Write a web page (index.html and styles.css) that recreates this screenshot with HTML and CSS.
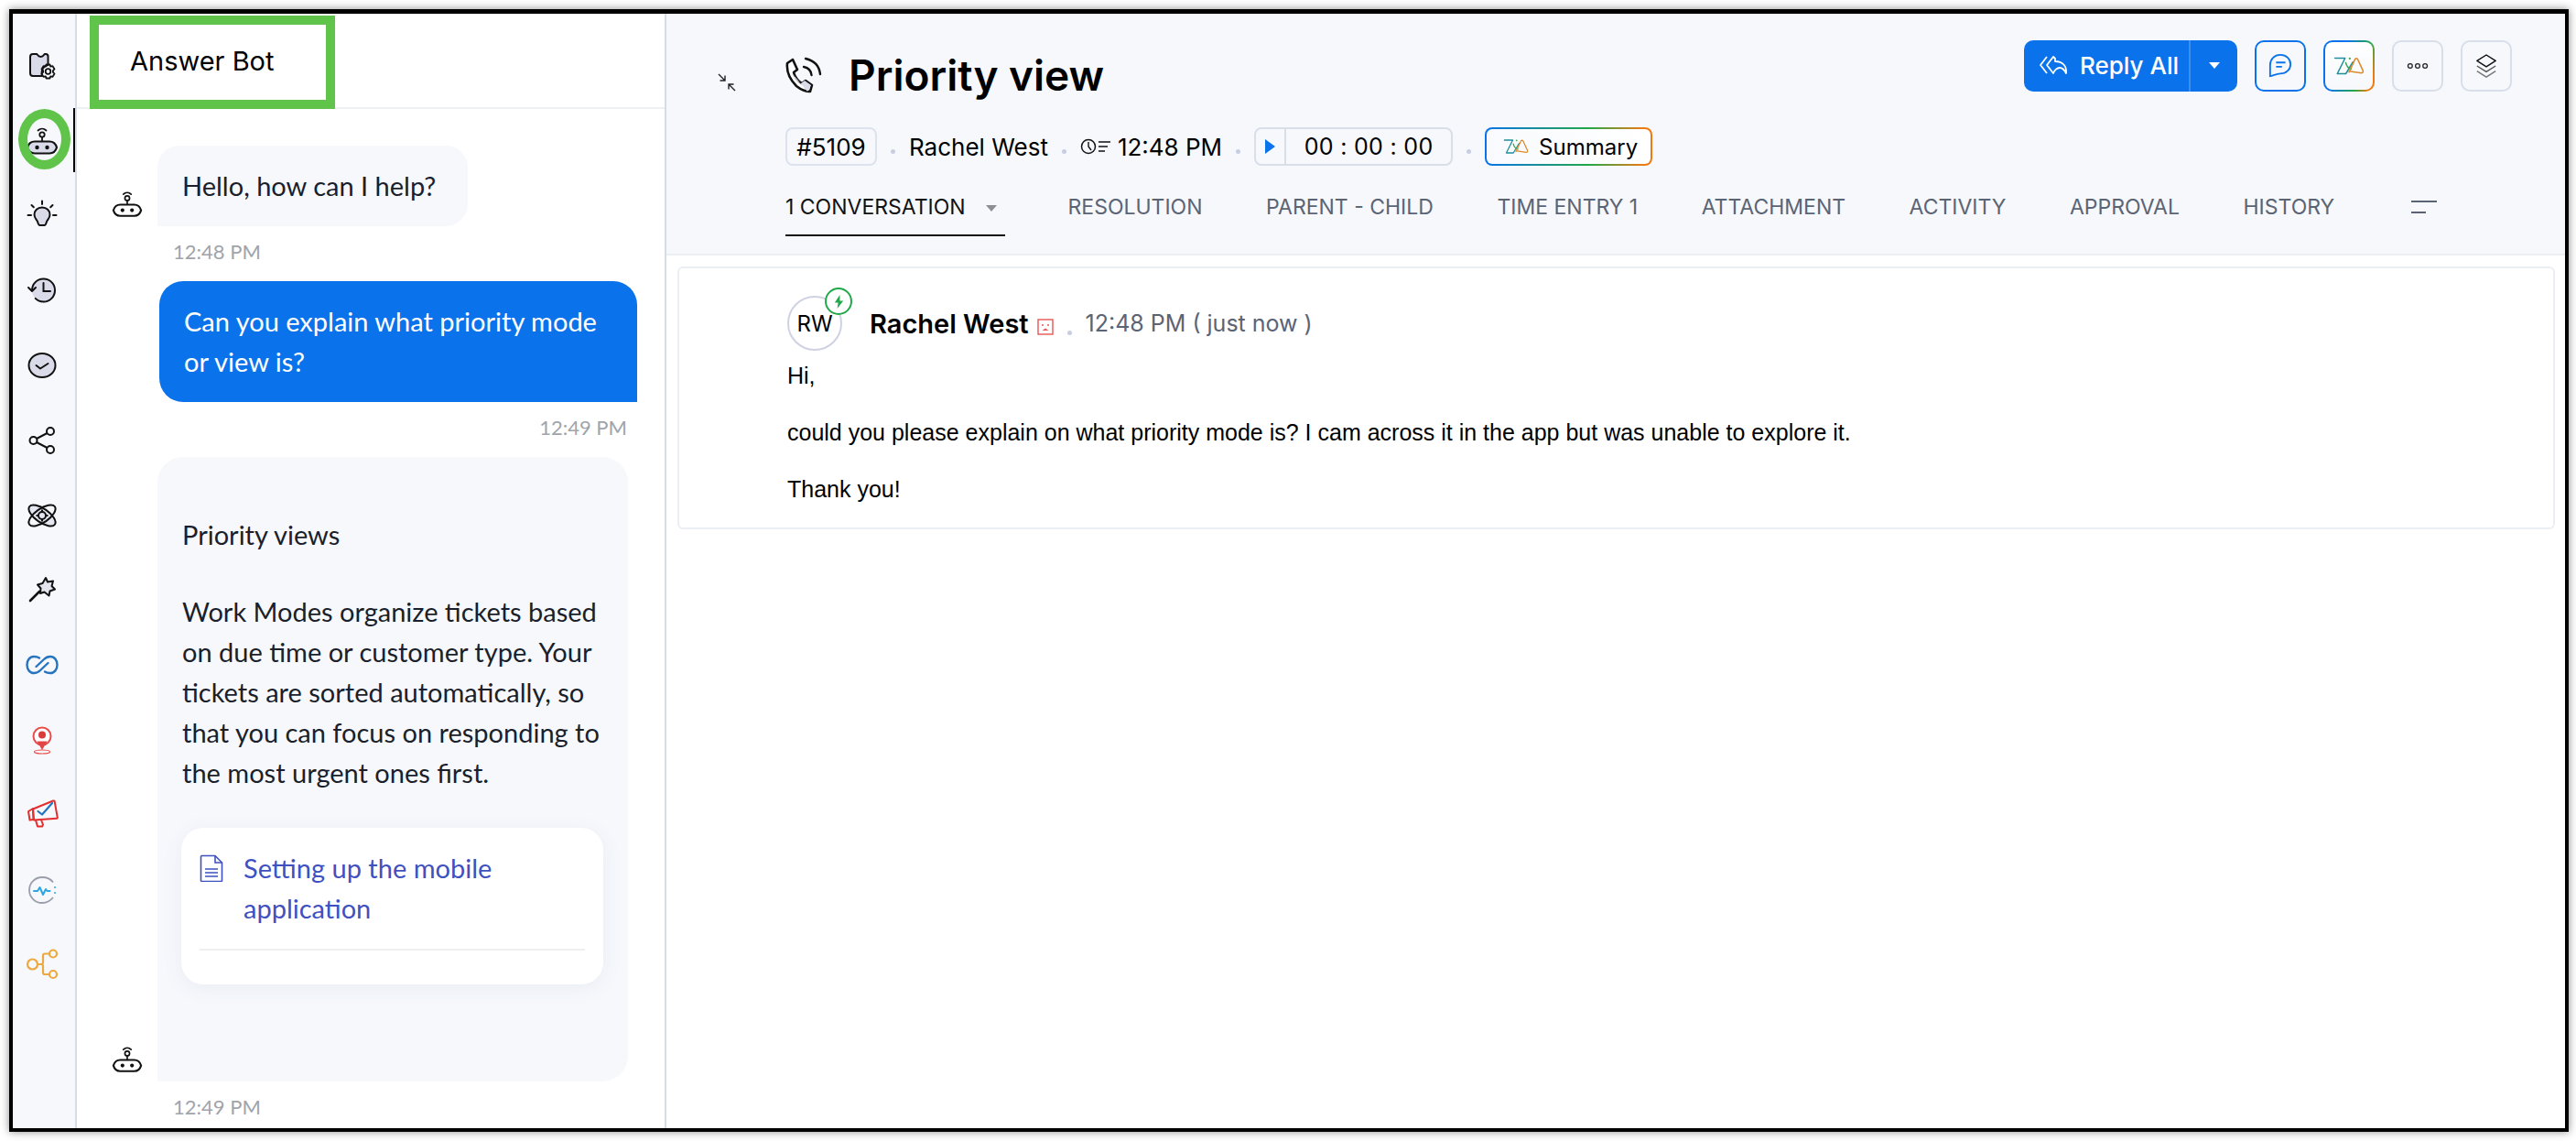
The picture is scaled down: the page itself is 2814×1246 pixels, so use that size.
FILE: index.html
```html
<!DOCTYPE html>
<html lang="en">

<head>
    <meta charset="utf-8">
    <meta name="viewport" content="width=device-width, initial-scale=1.0">
    <title>Priority view</title>
    <link rel="stylesheet" href="styles.css">
</head>

<body>

    <svg class="defs" width="0" height="0" aria-hidden="true">
        <defs>
            <symbol id="bot" viewBox="0 0 36 36">
                <path d="M13.5 6.5c2.6-2.4 6.4-2.4 9 0" fill="none" stroke="currentColor" stroke-width="1.8" stroke-linecap="round"/>
                <circle cx="18" cy="11" r="2.7" fill="none" stroke="currentColor" stroke-width="1.8"/>
                <path d="M18 13.7v4.8" stroke="currentColor" stroke-width="1.8"/>
                <path d="M10 18.5h16c4 0 7 3 8 6.5-1 3.500-4 6.500-8 6.500H10c-4 0-7-3-8-6.500 1-3.500 4-6.500 8-6.500z" fill="var(--bot-fill, none)" stroke="currentColor" stroke-width="2.200"/>
                <circle cx="12.500" cy="25" r="2.200" fill="currentColor"/>
                <circle cx="23.500" cy="25" r="2.200" fill="currentColor"/>
            </symbol>
            <symbol id="zia" viewBox="0 0 40 26">
                <path d="M2 3h13L5 23h11l9-15" fill="none" stroke="#1f8f9c" stroke-width="1.800" stroke-linejoin="round" stroke-linecap="round"/>
                <path d="M16 9c1 5 3 7 7 8" fill="none" stroke="#3aa655" stroke-width="1.800" stroke-linecap="round"/>
                <path d="M20 21l8-17c1-1 2-1 3 0l7 15c.5 2-.5 3-2 3l-14-2" fill="none" stroke="#dd8a2c" stroke-width="1.800" stroke-linejoin="round" stroke-linecap="round"/>
                <circle cx="21" cy="3.500" r="1.300" fill="#3aa655"/>
            </symbol>
        </defs>
    </svg>

    <div class="frame">

        <nav class="rail">
            <a class="rail_item">
                <svg viewBox="0 0 36 36"><path d="M8 5h4c1 0 1 3 4.500 3S20 5 21 5h1c1.500 0 2.500 1 2.500 2.500V17c-5 1-8 5-6.500 12H8c-1.700 0-3-1.300-3-3V8c0-1.700 1.300-3 3-3z" fill="#d9dbe9" stroke="#111" stroke-width="2" stroke-linejoin="round"/><circle cx="24.500" cy="24" r="2.800" fill="none" stroke="#111" stroke-width="1.800"/><path d="M22.500 16.500h4l.7 2.200 2.300-.6 2 3.400-1.600 1.700 0 1.600 1.600 1.700-2 3.400-2.300-.6-.7 2.200h-4l-.7-2.200-2.300.6-2-3.400 1.600-1.700 0-1.600-1.600-1.700 2-3.400 2.300.6z" fill="none" stroke="#111" stroke-width="1.800" stroke-linejoin="round"/></svg>
            </a>
            <a class="rail_item rail_active">
                <svg class="rail_bot" viewBox="0 0 36 36"><use href="#bot"/></svg>
                <span class="ring"></span>
            </a>
            <a class="rail_item">
                <svg viewBox="0 0 36 36"><path d="M18 9.500c-5 0-8.500 3.500-8.500 8 0 3.500 2.500 5 3.500 7.500.5 1.500 1 4 2.500 4h5c1.500 0 2-2.500 2.500-4 1-2.500 3.500-4 3.500-7.500 0-4.500-3.500-8-8.500-8z" fill="#d9dbe9" stroke="#111" stroke-width="2"/><path d="M18 2.500v3.500M6.500 7l2.300 2.300M29.500 7l-2.300 2.300M2.500 18h3.500M30 18h3.500" stroke="#111" stroke-width="2" stroke-linecap="round"/></svg>
            </a>
            <a class="rail_item">
                <svg viewBox="0 0 36 36"><circle cx="19.500" cy="18" r="12.500" fill="#d9dbe9"/><path d="M7 18c0-7 5.500-12.500 12.500-12.500S32 11 32 18s-5.500 12.500-12.500 12.500c-3.500 0-6.500-1.300-8.800-3.600" fill="none" stroke="#111" stroke-width="2" stroke-linecap="round"/><path d="M3 15l4 4 4-4" fill="none" stroke="#111" stroke-width="2" stroke-linecap="round" stroke-linejoin="round"/><path d="M19.500 10v9H27" fill="none" stroke="#111" stroke-width="2" stroke-linecap="round"/></svg>
            </a>
            <a class="rail_item">
                <svg viewBox="0 0 36 36"><ellipse cx="18" cy="18" rx="14.500" ry="13" fill="#d9dbe9" stroke="#111" stroke-width="2"/><path d="M11.500 18l4.500 3.500 8.500-5.500" fill="none" stroke="#111" stroke-width="2" stroke-linecap="round" stroke-linejoin="round"/></svg>
            </a>
            <a class="rail_item">
                <svg viewBox="0 0 36 36"><circle cx="8.500" cy="18" r="4" fill="#f6f8fc" stroke="#111" stroke-width="2"/><circle cx="27" cy="8" r="4" fill="#f6f8fc" stroke="#111" stroke-width="2"/><circle cx="27" cy="28" r="4" fill="#f6f8fc" stroke="#111" stroke-width="2"/><path d="M12 16l11.500-6M12 20l11.500 6" stroke="#111" stroke-width="2"/></svg>
            </a>
            <a class="rail_item">
                <svg viewBox="0 0 36 36"><g fill="none" stroke="#111" stroke-width="2"><ellipse cx="18" cy="18" rx="17" ry="7.500" transform="rotate(35 18 18)" fill="#d9dbe9" fill-opacity=".6"/><ellipse cx="18" cy="18" rx="17" ry="7.500" transform="rotate(-35 18 18)"/><circle cx="18" cy="18" r="4"/><path d="M18 11.500v2.500M18 22v2.500M11.500 18h2.500M22 18h2.500"/></g></svg>
            </a>
            <a class="rail_item">
                <svg viewBox="0 0 36 36"><path d="M22 5l2 4.500 6-1-1.500 5.500 3.500 3.500-5.500 2-1 5-5-4-4.500 1.500.5-5.500-3.500-4 5.500-1.500z" fill="#e3e4ee" stroke="#111" stroke-width="2" stroke-linejoin="round"/><path d="M15 20L5 30" stroke="#111" stroke-width="2.600" stroke-linecap="round"/></svg>
            </a>
            <a class="rail_item">
                <svg viewBox="0 0 36 36"><g fill="none" stroke="#2673bf" stroke-width="2.400" stroke-linecap="round"><path d="M15 10.500c-2-1.300-4-1.500-6-1.500-4.500 0-7.500 4-7.500 9s3 9 7.500 9c3 0 5-1 7-3l8.500-8"/><path d="M21 25.500c2 1.300 4 1.500 6 1.500 4.500 0 7.500-4 7.500-9s-3-9-7.500-9c-3 0-5 1-7 3l-8.500 8"/></g></svg>
            </a>
            <a class="rail_item">
                <svg viewBox="0 0 36 36"><circle cx="18" cy="14" r="9.500" fill="#fff" stroke="#ea4b4b" stroke-width="2"/><circle cx="18" cy="12.500" r="4" fill="#d83c3c"/><path d="M12.500 19.500h11L18 29z" fill="#e24545"/><ellipse cx="18" cy="31" rx="8.500" ry="2" fill="none" stroke="#ea4b4b" stroke-width="1.200"/></svg>
            </a>
            <a class="rail_item">
                <svg viewBox="0 0 36 36"><path d="M3 14l5-3 .5 12L4.500 23.500z" fill="none" stroke="#e42e2e" stroke-width="2" stroke-linejoin="round"/><path d="M8 11.500L30 2.500c1-.3 1.500 0 1.700.8l3 17c.2.9-.2 1.500-1 1.500L9 23.500z" fill="none" stroke="#e42e2e" stroke-width="2" stroke-linejoin="round"/><path d="M11 23.500l2 7h5l1-2-2-5" fill="none" stroke="#e42e2e" stroke-width="2" stroke-linejoin="round"/><path d="M13.500 14l4.500 3.500L29 5" fill="none" stroke="#2673bf" stroke-width="2.200" stroke-linecap="round" stroke-linejoin="round"/></svg>
            </a>
            <a class="rail_item">
                <svg viewBox="0 0 36 36"><path d="M30 9.500C27.500 6 23 4 18 4 10 4 4 10.500 4 18s6 14 14 14c5 0 9-2.200 12-6" fill="none" stroke="#9a9eab" stroke-width="1.800"/><path d="M9 19h4l2.500-4 3.500 8 3-6 1.500 2h3" fill="none" stroke="#2ea6e0" stroke-width="2" stroke-linejoin="round" stroke-linecap="round"/><circle cx="32" cy="15" r="1" fill="#2ea6e0"/><circle cx="32" cy="21" r="1" fill="#2ea6e0"/></svg>
            </a>
            <a class="rail_item">
                <svg viewBox="0 0 36 36"><g fill="none" stroke="#eca93f" stroke-width="2.200"><circle cx="7.500" cy="18" r="5.500"/><circle cx="30" cy="6.500" r="4"/><circle cx="30" cy="29" r="4"/><path d="M13 18h4M25.500 6.500h-4.500c-1.200 0-2 .8-2 2V16c0 1.200-.8 2-2 2 1.200 0 2 .8 2 2v7c0 1.200.8 2 2 2h4.500"/></g></svg>
            </a>
        </nav>

        <aside class="chat">
            <header class="chat_head">
                <h2 class="chat_title">Answer Bot</h2>
            </header>

            <div class="chat_body">
                <div class="msg">
                    <svg class="msg_bot" viewBox="0 0 36 36"><use href="#bot"/></svg>
                    <p class="bubble bubble_short">Hello, how can I help?</p>
                </div>
                <p class="stamp">12:48 PM</p>

                <p class="bubble bubble_me">Can you explain what priority mode or view is?</p>
                <p class="stamp stamp_me">12:49 PM</p>

                <div class="msg">
                    <svg class="msg_bot" viewBox="0 0 36 36"><use href="#bot"/></svg>
                    <div class="bubble bubble_long">
                        <p class="answer_title">Priority views</p>
                        <p class="answer_text">Work Modes organize tickets based on due time or customer type. Your tickets are sorted automatically, so that you can focus on responding to the most urgent ones first.</p>
                        <div class="article">
                            <div class="article_row">
                                <svg class="article_icon" viewBox="0 0 26 30"><path d="M1.500 2.500c0-.6.400-1 1-1H17L24.500 9v19.500c0 .6-.4 1-1 1h-21c-.6 0-1-.4-1-1z" fill="none" stroke="#3f51c0" stroke-width="1.600"/><path d="M17 1.500V9h7.500M6 16h14M6 20h14M6 24h14" fill="none" stroke="#3f51c0" stroke-width="1.600"/></svg>
                                <a class="article_link">Setting up the mobile application</a>
                            </div>
                        </div>
                    </div>
                </div>
                <p class="stamp">12:49 PM</p>
            </div>
        </aside>

        <main class="ticket">
            <header class="ticket_head">
                <div class="title_row">
                    <svg class="shrink" viewBox="0 0 20 20"><path d="M1 1l7 7M8 2.500V8H2.500M19 19l-7-7M12 17.500V12h5.500" fill="none" stroke="#222" stroke-width="1.400"/></svg>
                    <svg class="call" viewBox="0 0 40 40"><path d="M8 3L2 7c-1 9 3 18 10 25 5 4 11 6 15 6l2-7-7-5-4 3c-3-1-8-7-9-12l4-3z" fill="#fff" stroke="#111" stroke-width="2.600" stroke-linejoin="round"/><path d="M24 38l4-7-7-5-4 3c-3-1-7-5-8-9" fill="#d9dbe9" stroke="none"/><path d="M20 11c5 1 8 4 8.500 9M22 2c9 2 15 8 16 17" fill="none" stroke="#111" stroke-width="2.400" stroke-linecap="round"/></svg>
                    <h1 class="ticket_title">Priority view</h1>
                    <div class="actions">
                        <div class="reply">
                            <span class="reply_main">
                                <svg class="reply_icon" viewBox="0 0 32 28"><path d="M9 4L2 13l7 9M16 4L9 13l7 9c1-3 4-6 7-6 3 0 5 2 7 6 1-8-4-13-12-13V6z" fill="none" stroke="#fff" stroke-width="1.800" stroke-linejoin="round"/></svg>
                                Reply All
                            </span>
                            <span class="reply_more"><i class="caret caret_white"></i></span>
                        </div>
                        <span class="icon_btn icon_blue">
                            <svg viewBox="0 0 28 30"><path d="M14 2C7 2 2 7 2 14v13c4-1 8-3 12-3 7 0 12-5 12-11S21 2 14 2z" fill="none" stroke="#0a73eb" stroke-width="2"/><path d="M9 11h11M9 16h7" stroke="#0a73eb" stroke-width="2"/></svg>
                        </span>
                        <span class="icon_btn icon_zia"><svg class="zia_big" viewBox="0 0 40 26"><use href="#zia"/></svg></span>
                        <span class="icon_btn">
                            <svg viewBox="0 0 28 10"><g fill="none" stroke="#222" stroke-width="1.500"><circle cx="4.500" cy="5" r="2.800"/><circle cx="14" cy="5" r="2.800"/><circle cx="23.500" cy="5" r="2.800"/></g></svg>
                        </span>
                        <span class="icon_btn">
                            <svg viewBox="0 0 26 30"><path d="M13 2l11 7-11 7L2 9z" fill="none" stroke="#111" stroke-width="1.600" stroke-linejoin="round"/><path d="M2 15l11 7 11-7" fill="none" stroke="#555" stroke-width="1.600"/><path d="M2 21l11 7 11-7" fill="none" stroke="#777" stroke-width="1.600"/></svg>
                        </span>
                    </div>
                </div>

                <div class="meta_row">
                    <span class="ticket_id">#5109</span>
                    <i class="dot"></i>
                    <span class="contact">Rachel West</span>
                    <i class="dot"></i>
                    <span class="due">
                        <svg class="due_icon" viewBox="0 0 34 20"><circle cx="9" cy="10" r="7.500" fill="none" stroke="#111" stroke-width="1.500"/><path d="M9 5v5l3 4" fill="none" stroke="#111" stroke-width="1.400"/><path d="M20 5h13M20 10h10M20 15h7" stroke="#111" stroke-width="1.500"/></svg>
                        12:48 PM
                    </span>
                    <i class="dot"></i>
                    <span class="timer">
                        <span class="timer_play"><i class="play"></i></span>
                        <span class="timer_time">00 : 00 : 00</span>
                    </span>
                    <i class="dot"></i>
                    <span class="summary"><svg class="zia_small" viewBox="0 0 40 26"><use href="#zia"/></svg>Summary</span>
                </div>

                <div class="tabs">
                    <a class="tab tab_active">1 CONVERSATION <i class="caret caret_grey"></i></a>
                    <a class="tab">RESOLUTION</a>
                    <a class="tab">PARENT - CHILD</a>
                    <a class="tab">TIME ENTRY 1</a>
                    <a class="tab">ATTACHMENT</a>
                    <a class="tab">ACTIVITY</a>
                    <a class="tab">APPROVAL</a>
                    <a class="tab">HISTORY</a>
                    <span class="tab_menu"><i class="bar_long"></i><i class="bar_short"></i></span>
                </div>
            </header>

            <article class="thread">
                <div class="thread_head">
                    <span class="avatar">RW
                        <span class="avatar_badge"><svg viewBox="0 0 14 18"><path d="M8 1L2 10h4l-1 7 7-9H8z" fill="#22a84a"/></svg></span>
                    </span>
                    <strong class="sender">Rachel West</strong>
                    <svg class="mood" viewBox="0 0 18 18"><rect x="1" y="1" width="16" height="16" fill="#fff" stroke="#ea5555" stroke-width="1.400"/><circle cx="6" cy="7" r="1" fill="#ea5555"/><circle cx="12" cy="7" r="1" fill="#ea5555"/><path d="M5.500 13L9 10.500l3.500 2.500z" fill="#ea5555"/></svg>
                    <i class="dot"></i>
                    <span class="sent">12:48 PM ( just now )</span>
                </div>
                <p class="thread_text">Hi,</p>
                <p class="thread_text">could you please explain on what priority mode is? I cam across it in the app but was unable to explore it.</p>
                <p class="thread_text">Thank you!</p>
            </article>
        </main>

    </div>

</body></html>
```

FILE: styles.css
```css
* {
    box-sizing: border-box;
}

html, body {
    margin: 0;
    height: 100%;
    background-color: #fff;
}

p, h1, h2 {
    margin: 0;
}

.defs {
    position: absolute;
}

.frame {
    display: flex;
    width: 2796px;
    height: 1226px;
    margin: 10px 0 0 10px;
    border: 4px solid #000;
    border-top-width: 5px;
    box-shadow: 0 0 9px rgba(0, 0, 0, 0.45);
    overflow: hidden;
}

/* left icon rail */
.rail {
    flex: 0 0 70px;
    padding: 16px 4px 0 0;
    background-color: #f6f8fc;
    border-right: 2px solid #d5dde9;
}

.rail_item {
    position: relative;
    display: flex;
    align-items: center;
    justify-content: center;
    height: 81.8px;
}

.rail_item svg {
    width: 36px;
    height: 36px;
}

.rail_active::after {
    content: "";
    position: absolute;
    top: 5px;
    bottom: 7px;
    right: -4px;
    width: 2px;
    background-color: #000;
}

.rail_bot {
    --bot-fill: #d9dbe9;
    color: #111;
}

.ring {
    position: absolute;
    left: 6px;
    top: 6px;
    width: 57px;
    height: 66px;
    border: 10px solid #60c44a;
    border-radius: 50%;
}

/* answer bot panel */
.chat {
    flex: 0 0 642px;
    background-color: #fff;
    border-right: 2px solid #d5dde9;
    font-family: Lato, "Open Sans", sans-serif;
    font-size: 29px;
    line-height: 44px;
    color: #1a1f2b;
}

.chat_head {
    height: 102px;
    border-bottom: 2px solid #edf0f5;
}

.chat_title {
    width: 268px;
    height: 102px;
    margin: 2px 0 0 14px;
    padding-left: 34px;
    border: 10px solid #60c44a;
    border-top-width: 10px;
    border-bottom-width: 10px;
    font-family: Inter, sans-serif;
    font-size: 29px;
    font-weight: 400;
    line-height: 80px;
    color: #000;
}

.chat_body {
    padding: 40px 30px 0 38px;
}

.msg {
    display: flex;
    align-items: flex-end;
    gap: 16px;
}

.msg_bot {
    flex: none;
    width: 34px;
    height: 36px;
    margin-bottom: 6px;
    color: #111;
}

.bubble {
    padding: 22px 27px;
    background-color: #f6f8fc;
    border-radius: 24px 24px 24px 0;
}

.bubble_short {
    width: 339px;
}

.bubble_me {
    width: 522px;
    margin-left: 52px;
    background-color: #0a73eb;
    border-radius: 26px 26px 0 26px;
    color: #fff;
}

.bubble_long {
    width: 514px;
    height: 682px;
    padding-top: 63px;
    border-radius: 28px 28px 28px 0;
}

.stamp {
    margin-left: 67px;
    padding-top: 13px;
    height: 60px;
    font-size: 22px;
    line-height: 30px;
    color: #a0a4ab;
}

.stamp_me {
    margin: 0;
    padding-right: 11px;
    text-align: right;
}

.answer_title {
    margin-bottom: 40px;
}

.article {
    margin: 38px 0 0 -1px;
    height: 171px;
    padding: 36px 20px 0;
    background-color: #fff;
    border-radius: 24px;
    box-shadow: 0 4px 22px rgba(70, 80, 120, 0.07);
}

.article_row {
    display: flex;
    gap: 22px;
    height: 112px;
    padding-top: 6px;
    margin-top: -14px;
    padding-top: 0;
    border-bottom: 2px solid #eeeff1;
}

.article_icon {
    flex: none;
    width: 26px;
    height: 30px;
    margin-top: 7px;
}

.article_link {
    color: #3f51c0;
}

/* ticket side */
.ticket {
    flex: 1;
    min-width: 0;
    font-family: Inter, sans-serif;
    color: #000;
}

.ticket_head {
    height: 264px;
    padding: 0 0 0 130px;
    background-color: #f6f8fc;
    border-bottom: 2px solid #ebeff3;
}

.title_row {
    position: relative;
    display: flex;
    align-items: center;
    height: 119px;
}

.shrink {
    position: absolute;
    left: -74px;
    top: 65px;
    width: 20px;
    height: 20px;
}

.call {
    width: 40px;
    height: 40px;
    margin: 15px 29px 0 0;
}

.ticket_title {
    font-size: 46px;
    font-weight: 600;
    line-height: 56px;
    margin-top: 15px;
}

.actions {
    display: flex;
    gap: 19px;
    margin-left: auto;
    margin-right: 58px;
    margin-top: -6px;
}

.reply {
    display: flex;
    height: 56px;
    background-color: #0a73eb;
    border-radius: 10px;
    color: #fff;
}

.reply_main {
    display: flex;
    align-items: center;
    gap: 13px;
    width: 182px;
    padding-left: 16px;
    font-size: 26px;
    font-weight: 500;
    white-space: nowrap;
    border-right: 2px solid #3c8ff0;
}

.reply_icon {
    width: 32px;
    height: 28px;
}

.reply_more {
    display: flex;
    align-items: center;
    justify-content: center;
    width: 51px;
}

.caret {
    width: 0;
    height: 0;
    border-left: 6px solid transparent;
    border-right: 6px solid transparent;
    border-top: 7px solid #fff;
}

.caret_grey {
    display: inline-block;
    margin-left: 16px;
    vertical-align: 3px;
    border-top-color: #8d8f94;
}

.icon_btn {
    display: flex;
    align-items: center;
    justify-content: center;
    width: 56px;
    height: 56px;
    border: 2px solid #d8dfe9;
    border-radius: 10px;
}

.icon_btn svg {
    width: 24px;
    height: 28px;
}

.icon_blue {
    border-color: #0a73eb;
}

.icon_blue svg {
    width: 26px;
    height: 32px;
}

.icon_zia {
    border-color: transparent;
    background: linear-gradient(#fff, #f6f8fc) padding-box, linear-gradient(110deg, #0a73eb 35%, #22a84a 70%, #f07a10 90%) border-box;
}

.icon_btn .zia_big {
    width: 34px;
    height: 26px;
}

.meta_row {
    display: flex;
    align-items: center;
    height: 42px;
    margin-top: 5px;
    font-size: 26px;
}

.ticket_id {
    display: flex;
    align-items: center;
    justify-content: center;
    width: 100px;
    height: 42px;
    border: 2px solid #dde3ee;
    border-radius: 8px;
}

.dot {
    flex: none;
    width: 5px;
    height: 5px;
    margin: 10px 15px 0;
    border-radius: 50%;
    background-color: #c8cde0;
}

.due {
    display: flex;
    align-items: center;
    gap: 7px;
    white-space: nowrap;
}

.due_icon {
    width: 34px;
    height: 20px;
}

.timer {
    display: flex;
    width: 217px;
    height: 42px;
    border: 2px solid #d8dfe9;
    border-radius: 8px;
}

.timer_play {
    display: flex;
    align-items: center;
    justify-content: center;
    width: 33px;
    border-right: 2px solid #d8dfe9;
}

.play {
    width: 0;
    height: 0;
    border-top: 8px solid transparent;
    border-bottom: 8px solid transparent;
    border-left: 11px solid #0a73eb;
}

.timer_time {
    flex: 1;
    text-align: center;
    font-size: 25px;
    line-height: 38px;
    letter-spacing: 0.3px;
}

.summary {
    display: flex;
    align-items: center;
    gap: 11px;
    width: 183px;
    height: 42px;
    padding-left: 18px;
    border: 2px solid transparent;
    border-radius: 8px;
    background: linear-gradient(90deg, #f8fafd, #fff) padding-box, linear-gradient(90deg, #0a73eb, #22a84a 62%, #f07a10 95%) border-box;
    font-size: 24px;
}

.zia_small {
    width: 28px;
    height: 20px;
}

.tabs {
    display: flex;
    align-items: center;
    gap: 69.5px;
    height: 61px;
    margin-top: 14px;
    font-size: 23px;
    color: #5b6474;
}

.tab {
    white-space: nowrap;
}

.tab_active {
    position: relative;
    color: #111;
    width: 240px;
    margin-right: -1px;
}

.tab_active::after {
    content: "";
    position: absolute;
    left: 0;
    right: 0;
    bottom: -18px;
    height: 2px;
    background-color: #111;
}

.tab_menu {
    display: flex;
    flex-direction: column;
    gap: 10px;
    margin-left: 14px;
}

.bar_long {
    width: 28px;
    height: 2px;
    background-color: #5b6474;
}

.bar_short {
    width: 16px;
    height: 2px;
    background-color: #5b6474;
}

.thread {
    height: 287px;
    margin: 12px 11px 0 12px;
    padding: 30px 0 0 118px;
    border: 2px solid #ebeff3;
    border-radius: 6px;
    background-color: #fff;
}

.thread_head {
    display: flex;
    align-items: center;
    height: 60px;
    margin-bottom: 10px;
}

.avatar {
    position: relative;
    display: flex;
    align-items: center;
    justify-content: center;
    width: 60px;
    height: 60px;
    margin-right: 30px;
    border: 2px solid #cfd2e2;
    border-radius: 50%;
    font-size: 24px;
}

.avatar_badge {
    position: absolute;
    top: -11px;
    right: -13px;
    display: flex;
    align-items: center;
    justify-content: center;
    width: 30px;
    height: 30px;
    border: 2px solid #22a84a;
    border-radius: 50%;
    background-color: #fff;
}

.avatar_badge svg {
    width: 13px;
    height: 17px;
}

.sender {
    font-size: 29px;
    font-weight: 600;
    white-space: nowrap;
}

.mood {
    width: 18px;
    height: 18px;
    margin: 8px 0 0 9px;
}

.thread_head .dot {
    margin: 20px 15px 0;
}

.sent {
    font-size: 25px;
    color: #5b6474;
    white-space: nowrap;
}

.thread_text {
    margin-bottom: 27px;
    font-family: "Liberation Sans", Arial, sans-serif;
    font-size: 25px;
    line-height: 35px;
    color: #000;
}
```
